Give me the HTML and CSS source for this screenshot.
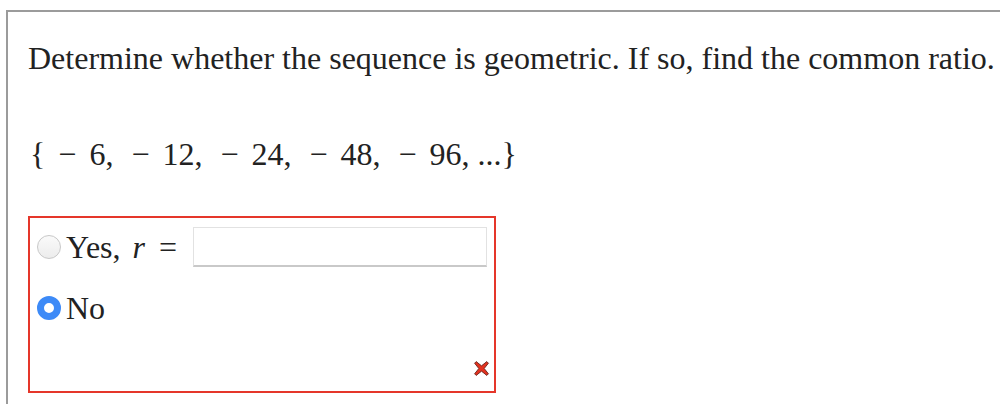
FILE: index.html
```html
<!DOCTYPE html>
<html>
<head>
<meta charset="utf-8">
<link rel="stylesheet" href="styles.css">
</head>
<body>
<div class="frame">
  <p class="question">Determine whether the sequence is geometric. If so, find the common ratio.</p>
  <p class="seq"><span class="br">{</span><span class="op first">−</span>6,<span class="op">−</span>12,<span class="op">−</span>24,<span class="op">−</span>48,<span class="op">−</span>96, ...}</p>
  <div class="answer">
    <div class="row">
      <span class="radio"></span>
      <span class="label">Yes, <i class="var">r</i> <span class="eq">=</span></span>
      <span class="input"></span>
    </div>
    <div class="row row2">
      <span class="radio on"></span>
      <span class="label">No</span>
    </div>
    <div class="mark">
      <svg width="17" height="17" viewBox="0 0 16 16"><path d="M3 1.5 L8 5.5 L13 1.5 L14.5 3 L10.5 8 L14.5 13 L13 14.5 L8 10.5 L3 14.5 L1.5 13 L5.5 8 L1.5 3 Z" fill="#e3321f" stroke="#6e2a24" stroke-width="0.9" stroke-linejoin="round"/></svg>
    </div>
  </div>
</div>
</body>
</html>
```
FILE: styles.css
```css
html, body { margin: 0; padding: 0; background: #fff; }
body { width: 1000px; height: 404px; overflow: hidden; font-family: "Liberation Serif", "Times New Roman", serif; color: #222; }
.frame {
  margin: 10px 0 0 6px;
  height: 394px;
  box-sizing: border-box;
  border-top: 2px solid #9b9b9b;
  border-left: 2px solid #9b9b9b;
  padding: 0 0 0 20px;
  display: flex;
  flex-direction: column;
  align-items: flex-start;
}
.question { margin: 28px 0 0 0; font-size: 32px; line-height: 36px; white-space: nowrap; }
.seq { margin: 60px 0 0 2px; font-size: 32px; line-height: 36px; white-space: nowrap; }
.seq .br { margin-right: 13px; }
.seq .op { margin: 0 13px 0 18px; }
.seq .op.first { margin-left: 0; }
.answer {
  margin-top: 44px;
  width: 464px;
  height: 173px;
  flex: none;
  border: 2px solid #e5362a;
  display: flex;
  flex-direction: column;
  position: relative;
}
.row { display: flex; align-items: center; height: 40px; margin-top: 9px; padding-left: 7px; }
.row2 { margin-top: 21px; }
.radio {
  width: 24px; height: 24px; border-radius: 50%;
  border: 1px solid #c8c8c8;
  background: linear-gradient(#fafafa, #ececec);
  box-sizing: border-box;
  flex: none;
}
.radio.on {
  border: 7px solid #3d8af7;
  background: #fff;
}
.label { font-size: 32px; margin-left: 5px; white-space: nowrap; }
.var { margin-left: 4px; }
.eq { margin-left: 6px; }
.input {
  margin-left: 16px;
  width: 292px; height: 37px;
  border: 1px solid #e2e2e2;
  border-bottom: 2px solid #c9c9c9;
  background: #fff;
  flex: none;
}
.mark { position: absolute; right: 4px; bottom: 14px; width: 17px; height: 17px; }
.mark svg { display: block; }
```
